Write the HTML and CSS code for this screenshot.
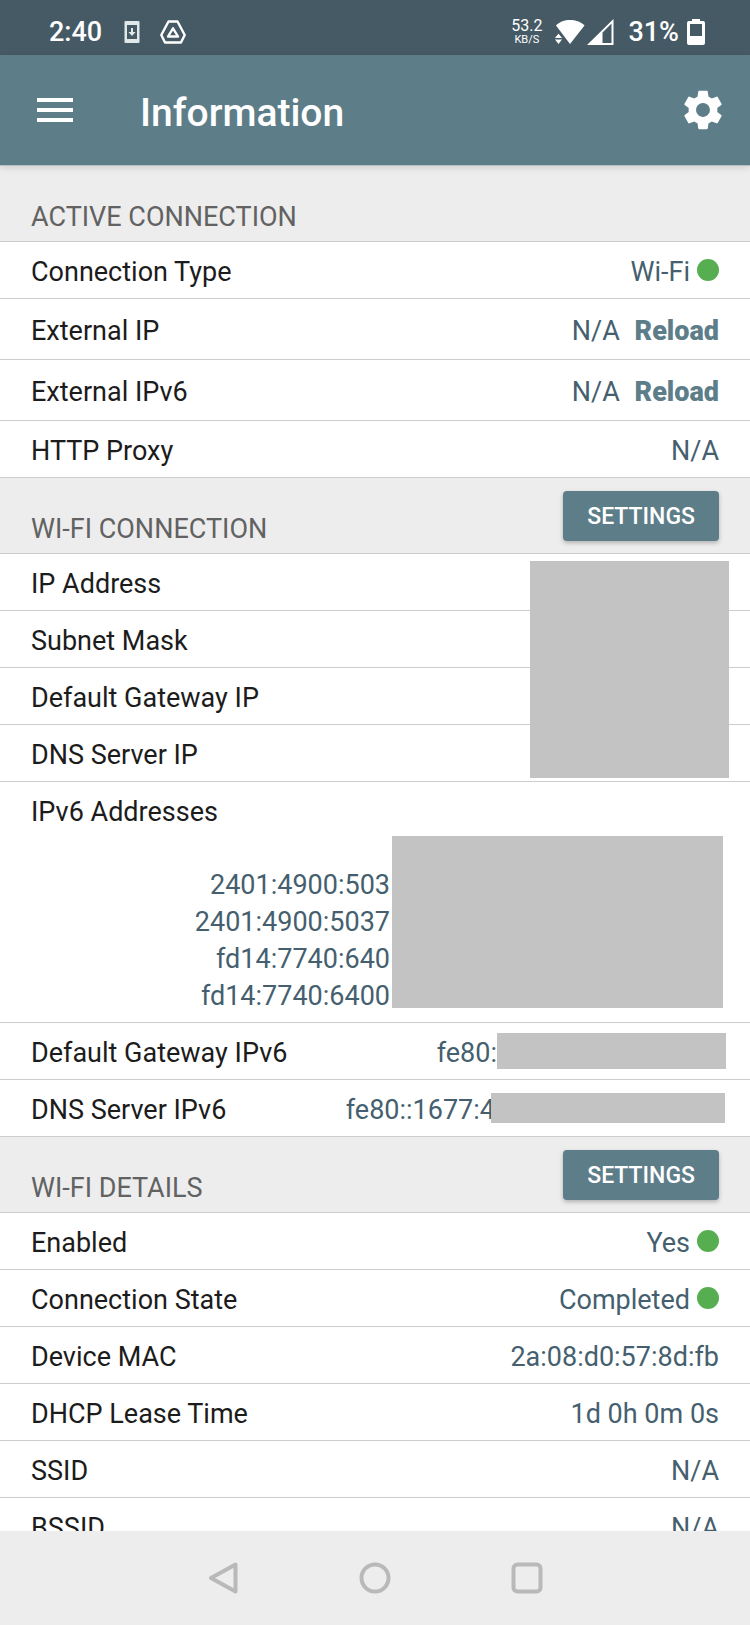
FILE: index.html
```html
<!DOCTYPE html>
<html lang="en">
<head>
  <meta charset="UTF-8" />
  <meta name="viewport" content="width=device-width, initial-scale=1.0" />
  <title>Information</title>
  <link rel="stylesheet" href="styles.css">
</head>
<body>

  <!-- Status bar -->
  <div class="status-bar">
    <span class="clock">2:40</span>
    <svg class="icon-phone" width="16" height="22" viewBox="0 0 16 22">
      <path fill="#dfe9ea" fill-rule="evenodd" d="M1.500 0h13a1 1 0 0 1 1 1v20a1 1 0 0 1-1 1h-13a1 1 0 0 1-1-1V1a1 1 0 0 1 1-1zM3 4v14h10V4z"/>
      <path fill="#dfe9ea" d="M7 7h2v4h2.600L8 15l-3.600-4H7z"/>
    </svg>
    <svg class="icon-drive" width="26" height="24" viewBox="0 0 26 24" fill="none" stroke="#fff" stroke-linejoin="round">
      <path stroke-width="2.400" d="M8.500 1.500h9L24.700 15l-3.700 7.500H5L1.300 15z"/>
      <path stroke-width="2.400" d="M13 8.300l5 8.200H8z"/>
    </svg>

    <div class="status-right">
      <div class="net-speed">
        <span class="speed">53.2</span>
        <span class="unit">KB/S</span>
      </div>
      <svg class="icon-wifi" width="30" height="26" viewBox="0 0 30 26" fill="#fff">
        <path d="M15 25L1 6.500C5 2.500 9.500 1 15 1s10.500 1.500 14.500 5.500z"/>
        <path stroke="#455a64" stroke-width="1" d="M-1 19.500L3.500 14l4.500 5.500zM-1 20l4.500 5.500L8 20z"/>
      </svg>
      <svg class="icon-signal" width="27" height="26" viewBox="0 0 27 26">
        <path fill="#fff" fill-rule="evenodd" d="M26.500 0v26H0zM24.500 4.500L15.500 13.500V24h9z"/>
      </svg>
      <span class="battery-text">31%</span>
      <svg class="icon-battery" width="18" height="26" viewBox="0 0 18 26">
        <path fill="#fff" fill-rule="evenodd" d="M5 0h8v2h3a2 2 0 0 1 2 2v20a2 2 0 0 1-2 2H2a2 2 0 0 1-2-2V4a2 2 0 0 1 2-2h3zM3 5v12h12V5z"/>
      </svg>
    </div>
  </div>

  <!-- App bar -->
  <header class="app-bar">
    <button type="button" class="icon-btn" aria-label="Menu">
      <svg width="38" height="26" viewBox="0 0 38 26" fill="#fff">
        <path d="M1 1h36v4H1zM1 11h36v4H1zM1 21h36v4H1z"/>
      </svg>
    </button>
    <h1>Information</h1>
    <button type="button" class="icon-btn" aria-label="Settings">
      <svg width="46" height="46" viewBox="0 0 24 24" fill="#fff">
        <path d="M19.430 12.980c.04-.32.07-.64.07-.98s-.03-.66-.07-.98l2.110-1.650c.19-.15.24-.42.12-.64l-2-3.460c-.12-.22-.39-.3-.61-.22l-2.490 1c-.52-.4-1.080-.73-1.690-.98l-.38-2.650C14.460 2.180 14.250 2 14 2h-4c-.25 0-.46.18-.49.42l-.38 2.650c-.61.25-1.170.59-1.690.98l-2.490-1c-.23-.09-.49 0-.61.22l-2 3.460c-.13.22-.07.49.12.64l2.110 1.650c-.04.32-.07.65-.07.98s.03.66.07.98l-2.110 1.650c-.19.15-.24.42-.12.64l2 3.460c.12.22.39.3.61.22l2.490-1c.52.4 1.080.73 1.690.98l.38 2.650c.03.24.24.42.49.42h4c.25 0 .46-.18.49-.42l.38-2.650c.61-.25 1.170-.59 1.690-.98l2.490 1c.23.09.49 0 .61-.22l2-3.460c.12-.22.07-.49-.12-.64l-2.110-1.650zM12 15.600c-1.980 0-3.600-1.620-3.600-3.600s1.620-3.600 3.600-3.600 3.600 1.620 3.600 3.600-1.620 3.600-3.600 3.600z"/>
      </svg>
    </button>
  </header>

  <main class="content">

    <section>
      <div class="section-head">
        <h2>ACTIVE CONNECTION</h2>
      </div>
      <dl>
        <div class="row">
          <dt>Connection Type</dt>
          <dd>Wi-Fi</dd>
          <span class="dot"></span>
        </div>
        <div class="row row-tall">
          <dt>External IP</dt>
          <dd>N/A <button type="button" class="reload">Reload</button></dd>
        </div>
        <div class="row row-tall">
          <dt>External IPv6</dt>
          <dd>N/A <button type="button" class="reload">Reload</button></dd>
        </div>
        <div class="row">
          <dt>HTTP Proxy</dt>
          <dd>N/A</dd>
        </div>
      </dl>
    </section>

    <section>
      <div class="section-head">
        <h2>WI-FI CONNECTION</h2>
        <button type="button" class="settings-btn">SETTINGS</button>
      </div>
      <!-- the addresses are hidden behind one grey block -->
      <dl class="masked">
        <div class="row"><dt>IP Address</dt><dd></dd></div>
        <div class="row"><dt>Subnet Mask</dt><dd></dd></div>
        <div class="row"><dt>Default Gateway IP</dt><dd></dd></div>
        <div class="row"><dt>DNS Server IP</dt><dd></dd></div>
      </dl>
      <dl>
        <div class="row-stacked">
          <dt>IPv6 Addresses</dt>
          <dd class="address-list">
            <ul>
              <li>2401:4900:503</li>
              <li>2401:4900:5037</li>
              <li>fd14:7740:640</li>
              <li>fd14:7740:6400</li>
            </ul>
            <span class="mask mask-list"></span>
          </dd>
        </div>
        <div class="row">
          <dt>Default Gateway IPv6</dt>
          <dd>fe80:</dd>
          <span class="mask mask-gateway"></span>
        </div>
        <div class="row">
          <dt>DNS Server IPv6</dt>
          <dd>fe80::1677:4</dd>
          <span class="mask mask-dns"></span>
        </div>
      </dl>
    </section>

    <section>
      <div class="section-head">
        <h2>WI-FI DETAILS</h2>
        <button type="button" class="settings-btn">SETTINGS</button>
      </div>
      <dl>
        <div class="row">
          <dt>Enabled</dt>
          <dd>Yes</dd>
          <span class="dot"></span>
        </div>
        <div class="row">
          <dt>Connection State</dt>
          <dd>Completed</dd>
          <span class="dot"></span>
        </div>
        <div class="row"><dt>Device MAC</dt><dd>2a:08:d0:57:8d:fb</dd></div>
        <div class="row"><dt>DHCP Lease Time</dt><dd>1d 0h 0m 0s</dd></div>
        <div class="row"><dt>SSID</dt><dd>N/A</dd></div>
        <div class="row"><dt>BSSID</dt><dd>N/A</dd></div>
      </dl>
    </section>

  </main>

  <!-- System navigation -->
  <nav class="nav-bar">
    <button type="button" class="icon-btn" aria-label="Back">
      <svg width="32" height="32" viewBox="0 0 32 32" fill="none" stroke="#b9b9b9" stroke-width="4" stroke-linejoin="round">
        <path d="M28.500 2.500v27L4 16z"/>
      </svg>
    </button>
    <button type="button" class="icon-btn" aria-label="Home">
      <svg width="32" height="32" viewBox="0 0 32 32" fill="none" stroke="#b9b9b9" stroke-width="4">
        <circle cx="16" cy="16" r="13.500"/>
      </svg>
    </button>
    <button type="button" class="icon-btn" aria-label="Recent apps">
      <svg width="32" height="32" viewBox="0 0 32 32" fill="none" stroke="#b9b9b9" stroke-width="4">
        <rect x="2.500" y="2.500" width="27" height="27" rx="4"/>
      </svg>
    </button>
  </nav>

</body>
</html>
```

FILE: styles.css
```css
* {
  box-sizing: border-box;
}

body {
  display: flex;
  flex-direction: column;
  height: 100vh;
  margin: 0;
  font-family: Roboto, 'Liberation Sans', sans-serif;
  font-size: 27px;
  line-height: 32px;
  color: #1c1c1c;
  background: #fff;
}

h1, h2, dl, dd, ul {
  margin: 0;
  padding: 0;
}

ul {
  list-style: none;
}

svg {
  display: block;
}

button {
  font-family: inherit;
  border: none;
  cursor: pointer;
}

.icon-btn {
  padding: 0;
  background: none;
}

/* status bar */
.status-bar {
  display: flex;
  flex-shrink: 0;
  align-items: center;
  height: 55px;
  padding: 8px 45px 0 49px;
  background: #455a64;
  color: #fff;
  font-weight: 500;
}

.icon-phone {
  margin-left: 22px;
}

.icon-drive {
  margin-left: 20px;
}

.status-right {
  display: flex;
  align-items: center;
  margin-left: auto;
}

.net-speed {
  display: flex;
  flex-direction: column;
  align-items: center;
  font-weight: 400;
}

.speed {
  font-size: 16px;
  line-height: 16px;
}

.unit {
  font-size: 11px;
  line-height: 11px;
}

.icon-wifi {
  margin-left: 13px;
}

.icon-signal {
  margin-left: 2px;
}

.battery-text {
  margin-left: 14px;
}

.icon-battery {
  margin-left: 8px;
}

/* app bar */
.app-bar {
  display: flex;
  flex-shrink: 0;
  align-items: center;
  height: 111px;
  padding: 0 24px 0 36px;
  background: #5d7d89;
  border-bottom: 1px solid #b4c0c4;
  box-shadow: 0 2px 6px rgba(0, 0, 0, 0.12);
  color: #fff;
  z-index: 1;
}

.app-bar h1 {
  flex: 1;
  margin-left: 66px;
  padding-top: 5px;
  font-size: 39px;
  line-height: 46px;
  font-weight: 500;
}

/* list */
.content {
  flex: 1;
  min-height: 0;
  overflow-y: auto;
  scrollbar-width: none;
}

.section-head {
  display: flex;
  justify-content: space-between;
  align-items: flex-end;
  min-height: 76px;
  padding: 0 31px;
  background: #ededed;
  border-bottom: 1px solid #cdcdcd;
}

.section-head h2 {
  padding-bottom: 8px;
  font-size: 27px;
  font-weight: 400;
  color: #626262;
}

.settings-btn {
  height: 50px;
  margin-bottom: 12px;
  padding: 0 24px;
  background: #5d7d89;
  border-radius: 4px;
  box-shadow: 0 2px 4px rgba(0, 0, 0, 0.25);
  color: #fff;
  font-size: 23px;
  font-weight: 500;
}

.row {
  display: flex;
  align-items: center;
  min-height: 57px;
  padding: 0 31px;
  border-bottom: 1px solid #cdcdcd;
}

.row-tall {
  min-height: 61px;
}

dt {
  padding-top: 4px;
}

dd {
  color: #455f6f;
}

.row dd {
  margin-left: auto;
  padding-top: 4px;
}

.reload {
  margin-left: 8px;
  padding: 0;
  background: none;
  color: #5d7d89;
  font-size: 27px;
  line-height: 32px;
  font-weight: 900;
}

.dot {
  width: 22px;
  height: 22px;
  margin-left: 7px;
  border-radius: 50%;
  background: #56ae50;
}

.row-stacked {
  padding: 10px 27px 7px 31px;
  border-bottom: 1px solid #cdcdcd;
}

.address-list {
  display: flex;
  justify-content: flex-end;
  align-items: flex-end;
  gap: 2px;
  margin-top: 8px;
  line-height: 37px;
  text-align: right;
}

/* grey blocks over private values */
.mask {
  flex-shrink: 0;
  background: #c3c3c3;
}

.mask-list {
  width: 331px;
  height: 172px;
  margin-bottom: 7px;
}

.mask-gateway {
  width: 229px;
  height: 36px;
  margin-right: -7px;
}

.mask-dns {
  width: 234px;
  height: 30px;
  margin-left: -4px;
  margin-right: -6px;
  z-index: 1;
}

.masked {
  position: relative;
}

.masked::after {
  content: '';
  position: absolute;
  top: 7px;
  right: 21px;
  bottom: 4px;
  width: 199px;
  background: #c3c3c3;
}

/* system navigation */
.nav-bar {
  display: flex;
  flex-shrink: 0;
  justify-content: center;
  align-items: center;
  gap: 120px;
  height: 94px;
  background: #ededed;
}
```
